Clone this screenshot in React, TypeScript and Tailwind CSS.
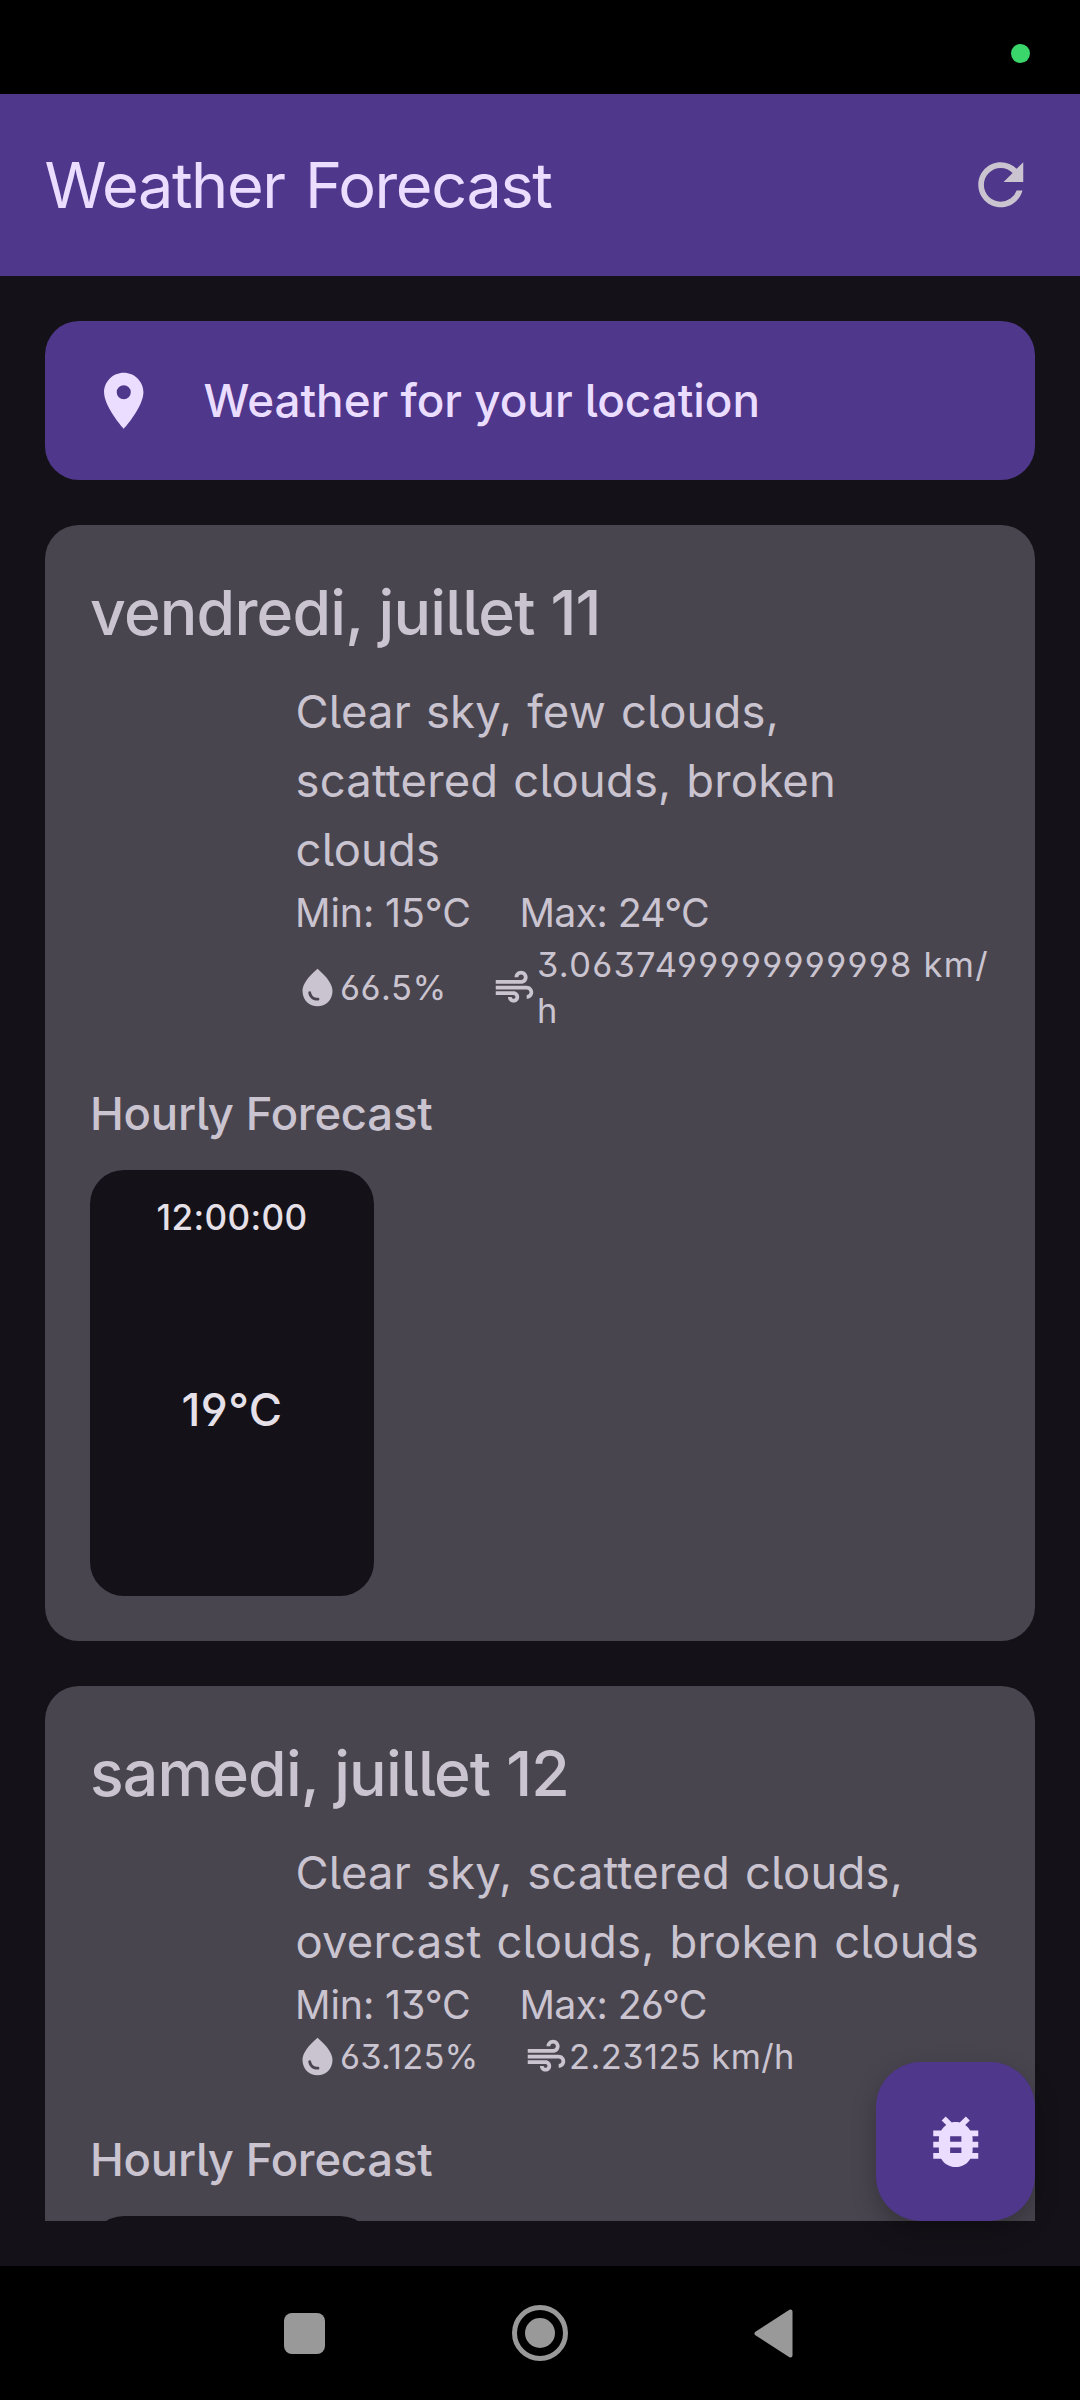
import type { ReactNode } from 'react';
import { MdAir, MdBugReport, MdPlace, MdRefresh, MdWaterDrop } from 'react-icons/md';

type Day = {
  date: string;
  lines: string[];
  min: string;
  max: string;
  humidity: string;
  humidityClass: string;
  wind: string[];
  windClass: string;
  hours: { time: string; temp: string }[];
};

const days: Day[] = [
  {
    date: 'vendredi, juillet 11',
    lines: ['Clear sky, few clouds,', 'scattered clouds, broken', 'clouds'],
    min: 'Min: 15°C',
    max: 'Max: 24°C',
    humidity: '66.5%',
    humidityClass: 'w-[107px] tracking-[0.55px]',
    wind: ['3.0637499999999998 km/', 'h'],
    windClass: 'tracking-[1.3px]',
    hours: [{ time: '12:00:00', temp: '19°C' }],
  },
  {
    date: 'samedi, juillet 12',
    lines: ['Clear sky, scattered clouds,', 'overcast clouds, broken clouds'],
    min: 'Min: 13°C',
    max: 'Max: 26°C',
    humidity: '63.125%',
    humidityClass: 'w-[139px] tracking-[0.2px]',
    wind: ['2.23125 km/h'],
    windClass: 'tracking-[0.45px]',
    hours: [{ time: '', temp: '' }],
  },
];

function Metric({ icon, className, children }: { icon: ReactNode; className: string; children: ReactNode }) {
  return (
    <div className="flex items-center">
      {icon}
      <div className={`whitespace-nowrap ${className}`}>{children}</div>
    </div>
  );
}

function DayCard({ day }: { day: Day }) {
  return (
    <section className="shrink-0 rounded-[34px] bg-[#49454f] p-[45px] text-[#cac4d0]">
      <h2 className="text-[62.5px] leading-[84px] font-medium tracking-[-0.82px]">{day.date}</h2>
      <div className="mt-[22.5px] ml-[205px]">
        {day.lines.map((line) => (
          <p key={line} className="pl-[0.5px] text-[45.4px] leading-[69.25px] tracking-[0.2px] whitespace-nowrap [word-spacing:2px]">
            {line}
          </p>
        ))}
        <div className="flex gap-[45px] text-[39.3px] leading-[57.5px]">
          <span className="w-[179.5px] tracking-[-0.1px] whitespace-nowrap">{day.min}</span>
          <span className="tracking-[-0.65px]">{day.max}</span>
        </div>
        <div className="flex items-center gap-[45px] text-[34.4px] leading-[46px]">
          <Metric icon={<MdWaterDrop className="size-[45px] shrink-0" />} className={day.humidityClass}>
            {day.humidity}
          </Metric>
          <Metric icon={<MdAir className="size-[45px] shrink-0" />} className={day.windClass}>
            {day.wind.map((part) => (
              <p key={part}>{part}</p>
            ))}
          </Metric>
        </div>
      </div>
      <h3 className="mt-[45px] text-[45.4px] leading-[69px] font-medium tracking-[-0.18px]">Hourly Forecast</h3>
      <div className="mt-[22.5px] flex gap-[22px]">
        {day.hours.map((hour, i) => (
          <div
            key={i}
            className="flex h-[426px] w-[284px] flex-col items-center rounded-[34px] bg-[#141218] pt-[23.5px] font-medium text-[#e6e0e9]"
          >
            <span className="text-[35.1px] leading-[46px] tracking-[0.38px]">{hour.time}</span>
            <span className="mt-[135.5px] text-[45.4px] leading-[69px] tracking-[0.48px]">{hour.temp}</span>
          </div>
        ))}
      </div>
    </section>
  );
}

export default function App() {
  return (
    <div className="flex h-[2400px] w-[1080px] flex-col overflow-hidden bg-[#141218] font-['Inter',sans-serif] [font-feature-settings:'cv03','cv04','cv05','cv09']">
      <div className="flex h-[94px] shrink-0 justify-end bg-black pt-[44px] pr-[50px]">
        <div className="size-[19px] rounded-full bg-[#3ad66b]" />
      </div>
      <header className="flex h-[182px] shrink-0 items-center justify-between bg-[#4f378b] pr-[45.5px] pl-[44.5px]">
        <h1 className="text-[63px] leading-none tracking-[-1.4px] text-[#eaddff] [word-spacing:4px]">Weather Forecast</h1>
        <MdRefresh className="size-[67.5px] text-[#cac4d0]" />
      </header>
      <main className="relative flex h-[1990px] shrink-0 flex-col px-[45px] pt-[45px] pb-[45px]">
        <div className="flex h-[159px] shrink-0 items-center rounded-[34px] bg-[#4f378b] pl-[45px] text-[#eaddff]">
          <MdPlace className="size-[67.5px]" />
          <span className="ml-[46px] pt-[2px] text-[45.8px] font-medium">Weather for your location</span>
        </div>
        <div className="mt-[45px] flex min-h-0 flex-1 flex-col gap-[45px] overflow-hidden">
          {days.map((day) => (
            <DayCard key={day.date} day={day} />
          ))}
        </div>
        <button className="absolute right-[45px] bottom-[45px] flex size-[159px] items-center justify-center rounded-[45px] bg-[#4f378b] text-[#eaddff] shadow-[0_10px_24px_0px_rgba(0,0,0,0.26)]">
          <MdBugReport className="size-[67.5px]" />
        </button>
      </main>
      <nav className="flex h-[134px] items-center bg-black pl-[284px]">
        <div className="size-[41px] rounded-[8px] bg-[#999]" />
        <div className="ml-[187px] flex size-[56px] items-center justify-center rounded-full border-[5px] border-[#999]">
          <div className="size-[30px] rounded-full bg-[#999]" />
        </div>
        <svg className="ml-[186px] h-[49px] w-[39px]" viewBox="0 0 39 49" fill="#999" stroke="#999" strokeWidth="4" strokeLinejoin="round">
          <path d="M2.5 24.5L36.5 2.5V46.5Z" />
        </svg>
      </nav>
    </div>
  );
}
